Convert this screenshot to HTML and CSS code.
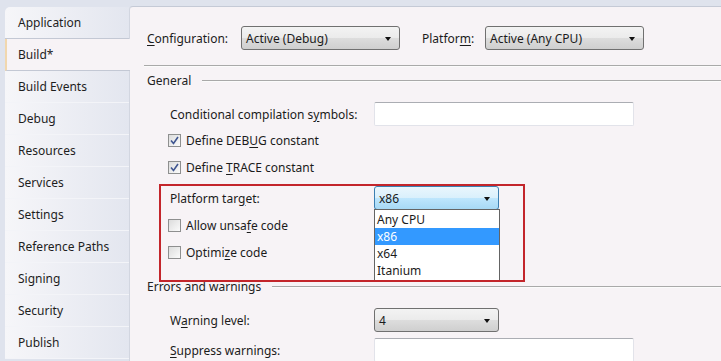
FILE: index.html
```html
<!DOCTYPE html>
<html lang="en">
<head>
	<meta charset="UTF-8">
	<title>Build - Project Properties</title>
	<link rel="stylesheet" href="styles.css">
</head>
<body>
	<div class="window">
		<nav class="tabs">
			<div class="tab">Application</div>
			<div class="tab active">Build*</div>
			<div class="tab">Build Events</div>
			<div class="tab">Debug</div>
			<div class="tab">Resources</div>
			<div class="tab">Services</div>
			<div class="tab">Settings</div>
			<div class="tab">Reference Paths</div>
			<div class="tab">Signing</div>
			<div class="tab">Security</div>
			<div class="tab">Publish</div>
		</nav>

		<main class="content">
			<div class="row config">
				<label class="configLabel"><u>C</u>onfiguration:</label>
				<div class="select wide">Active (Debug)<span class="arrow"></span></div>
				<label class="platformLabel">Platfor<u>m</u>:</label>
				<div class="select wide">Active (Any CPU)<span class="arrow"></span></div>
			</div>
			<div class="rule"></div>

			<div class="group general">General</div>

			<div class="row field symbols">
				<label class="fieldLabel">Conditional compilation s<u>y</u>mbols:</label>
				<div class="textbox"></div>
			</div>
			<div class="row check debug">
				<span class="box"><svg width="9" height="9" viewBox="0 0 9 9"><path d="M1 4.5 L3.5 7.5 L8 1" fill="none" stroke="#3f5590" stroke-width="1.6"/></svg></span>
				<span>Define DEB<u>U</u>G constant</span>
			</div>
			<div class="row check trace">
				<span class="box"><svg width="9" height="9" viewBox="0 0 9 9"><path d="M1 4.5 L3.5 7.5 L8 1" fill="none" stroke="#3f5590" stroke-width="1.6"/></svg></span>
				<span>Define <u>T</u>RACE constant</span>
			</div>

			<div class="row field target">
				<label class="fieldLabel">Platform tar<u>g</u>et:</label>
				<div class="dropWrap">
					<div class="select small focused">x86<span class="arrow"></span></div>
					<ul class="dropList">
						<li>Any CPU</li>
						<li class="picked">x86</li>
						<li>x64</li>
						<li>Itanium</li>
					</ul>
				</div>
			</div>
			<div class="row check unsafe">
				<span class="box"></span>
				<span>Allow unsa<u>f</u>e code</span>
			</div>
			<div class="row check optimize">
				<span class="box"></span>
				<span>Optimi<u>z</u>e code</span>
			</div>

			<div class="group errors">Errors and warnings</div>

			<div class="row field level">
				<label class="fieldLabel">W<u>a</u>rning level:</label>
				<div class="select small">4<span class="arrow"></span></div>
			</div>
			<div class="row field suppress">
				<label class="fieldLabel"><u>S</u>uppress warnings:</label>
				<div class="textbox"></div>
			</div>

			<div class="highlight"></div>
		</main>
	</div>
</body>
</html>
```

FILE: styles.css
```css
body{
	margin: 0;
	padding: 0;
	overflow: hidden;
	font-family: "Noto Sans", "Liberation Sans", sans-serif;
	font-size: 12px;
	color: #1b1b1b;
}

u{
	text-decoration: underline;
	text-underline-offset: 2px;
}

.window{
	height: 361px;
	display: flex;
	background: #dfe3ed;
	padding: 6px 0 0 5px;
	box-sizing: border-box;
}

.tabs{
	width: 124px;
	flex: none;
	display: flex;
	flex-direction: column;
	padding-top: 1px;
}

.tab{
	height: 32px;
	box-sizing: border-box;
	padding-left: 13px;
	display: flex;
	align-items: center;
	background: linear-gradient(to right, #f6f6f9, #e3e6ef);
	border-bottom: 1px solid #f3f4f8;
	color: #1e1e1e;
}

.tab:first-child{
	border-top-left-radius: 5px;
	border-bottom-color: #c3c8d4;
}

.tab.active{
	background: #f7f3f6;
	border-left: 2px solid #f1d7ae;
	padding-left: 11px;
	margin-right: -1px;
	position: relative;
	z-index: 1;
	border-bottom-color: #c3c8d4;
}

.content{
	flex: 1;
	position: relative;
	background: #f7f3f6;
	border-top: 1px solid #c5cad6;
	border-left: 1px solid #d2d6e0;
	border-top-left-radius: 4px;
	display: flex;
	flex-direction: column;
}

.row{
	display: flex;
	align-items: center;
	flex: none;
}

.config{
	margin-top: 19px;
	height: 24px;
	padding-left: 17px;
}

.configLabel{
	width: 94px;
}

.platformLabel{
	margin-left: 22px;
	width: 63px;
}

.select{
	height: 24px;
	box-sizing: border-box;
	border: 1px solid #707070;
	border-radius: 3px;
	background: linear-gradient(#f3f3f3, #ebebeb 50%, #dddddd 51%, #cfcfcf);
	display: flex;
	align-items: center;
	padding-left: 4px;
	position: relative;
}

.select.wide{
	width: 159px;
}

.select.small{
	width: 125px;
}

.select.focused{
	border-color: #3c7fb1;
	background: linear-gradient(#eaf6fd, #d9f0fc 50%, #bee6fd 51%, #a7d9f5);
}

.arrow{
	position: absolute;
	right: 8px;
	top: 10px;
	border-left: 3.5px solid transparent;
	border-right: 3.5px solid transparent;
	border-top: 4px solid #111;
}

.rule{
	margin: 15px 0 0 14px;
	border-top: 1px solid #a9a9a9;
	border-bottom: 1px solid #fbfbfb;
	flex: none;
}

.group{
	height: 16px;
	display: flex;
	align-items: center;
	padding-left: 17px;
	gap: 11px;
	flex: none;
	color: #222;
}

.group::after{
	content: "";
	flex: 1;
	border-top: 1px solid #a9a9a9;
	border-bottom: 1px solid #fbfbfb;
	margin-top: 1px;
}

.general{
	margin-top: 5px;
}

.errors{
	margin-top: 17px;
}

.field{
	height: 24px;
	padding-left: 40px;
}

.fieldLabel{
	width: 204px;
}

.textbox{
	width: 260px;
	height: 24px;
	box-sizing: border-box;
	background: #fff;
	border: 1px solid #e2e3ea;
	border-top-color: #abadb3;
	border-radius: 2px;
}

.check{
	height: 18px;
	padding-left: 38px;
	gap: 5px;
}

.box{
	width: 13px;
	height: 13px;
	box-sizing: border-box;
	border: 1px solid #8e8f8f;
	background: linear-gradient(135deg, #dcdcdc, #fbfbfb);
	display: flex;
	align-items: center;
	justify-content: center;
}

.symbols{
	margin-top: 14px;
}

.debug{
	margin-top: 5px;
}

.trace{
	margin-top: 9px;
}

.target{
	margin-top: 10px;
}

.unsafe{
	margin-top: 6px;
}

.optimize{
	margin-top: 9px;
}

.level{
	margin-top: 14px;
}

.suppress{
	margin-top: 6px;
}

.dropWrap{
	position: relative;
}

.dropList{
	position: absolute;
	top: 23px;
	left: 0;
	width: 126px;
	box-sizing: border-box;
	margin: 0;
	padding: 1px 0 1px;
	list-style: none;
	background: #fff;
	border: 1px solid #646464;
	z-index: 2;
}

.dropList li{
	height: 17px;
	line-height: 17px;
	padding-left: 2px;
}

.dropList li.picked{
	background: #3399ff;
	color: #fff;
}

.highlight{
	position: absolute;
	left: 29px;
	top: 177px;
	width: 366px;
	height: 98px;
	box-sizing: border-box;
	border: 2px solid #c3252b;
	z-index: 3;
	pointer-events: none;
}
```
